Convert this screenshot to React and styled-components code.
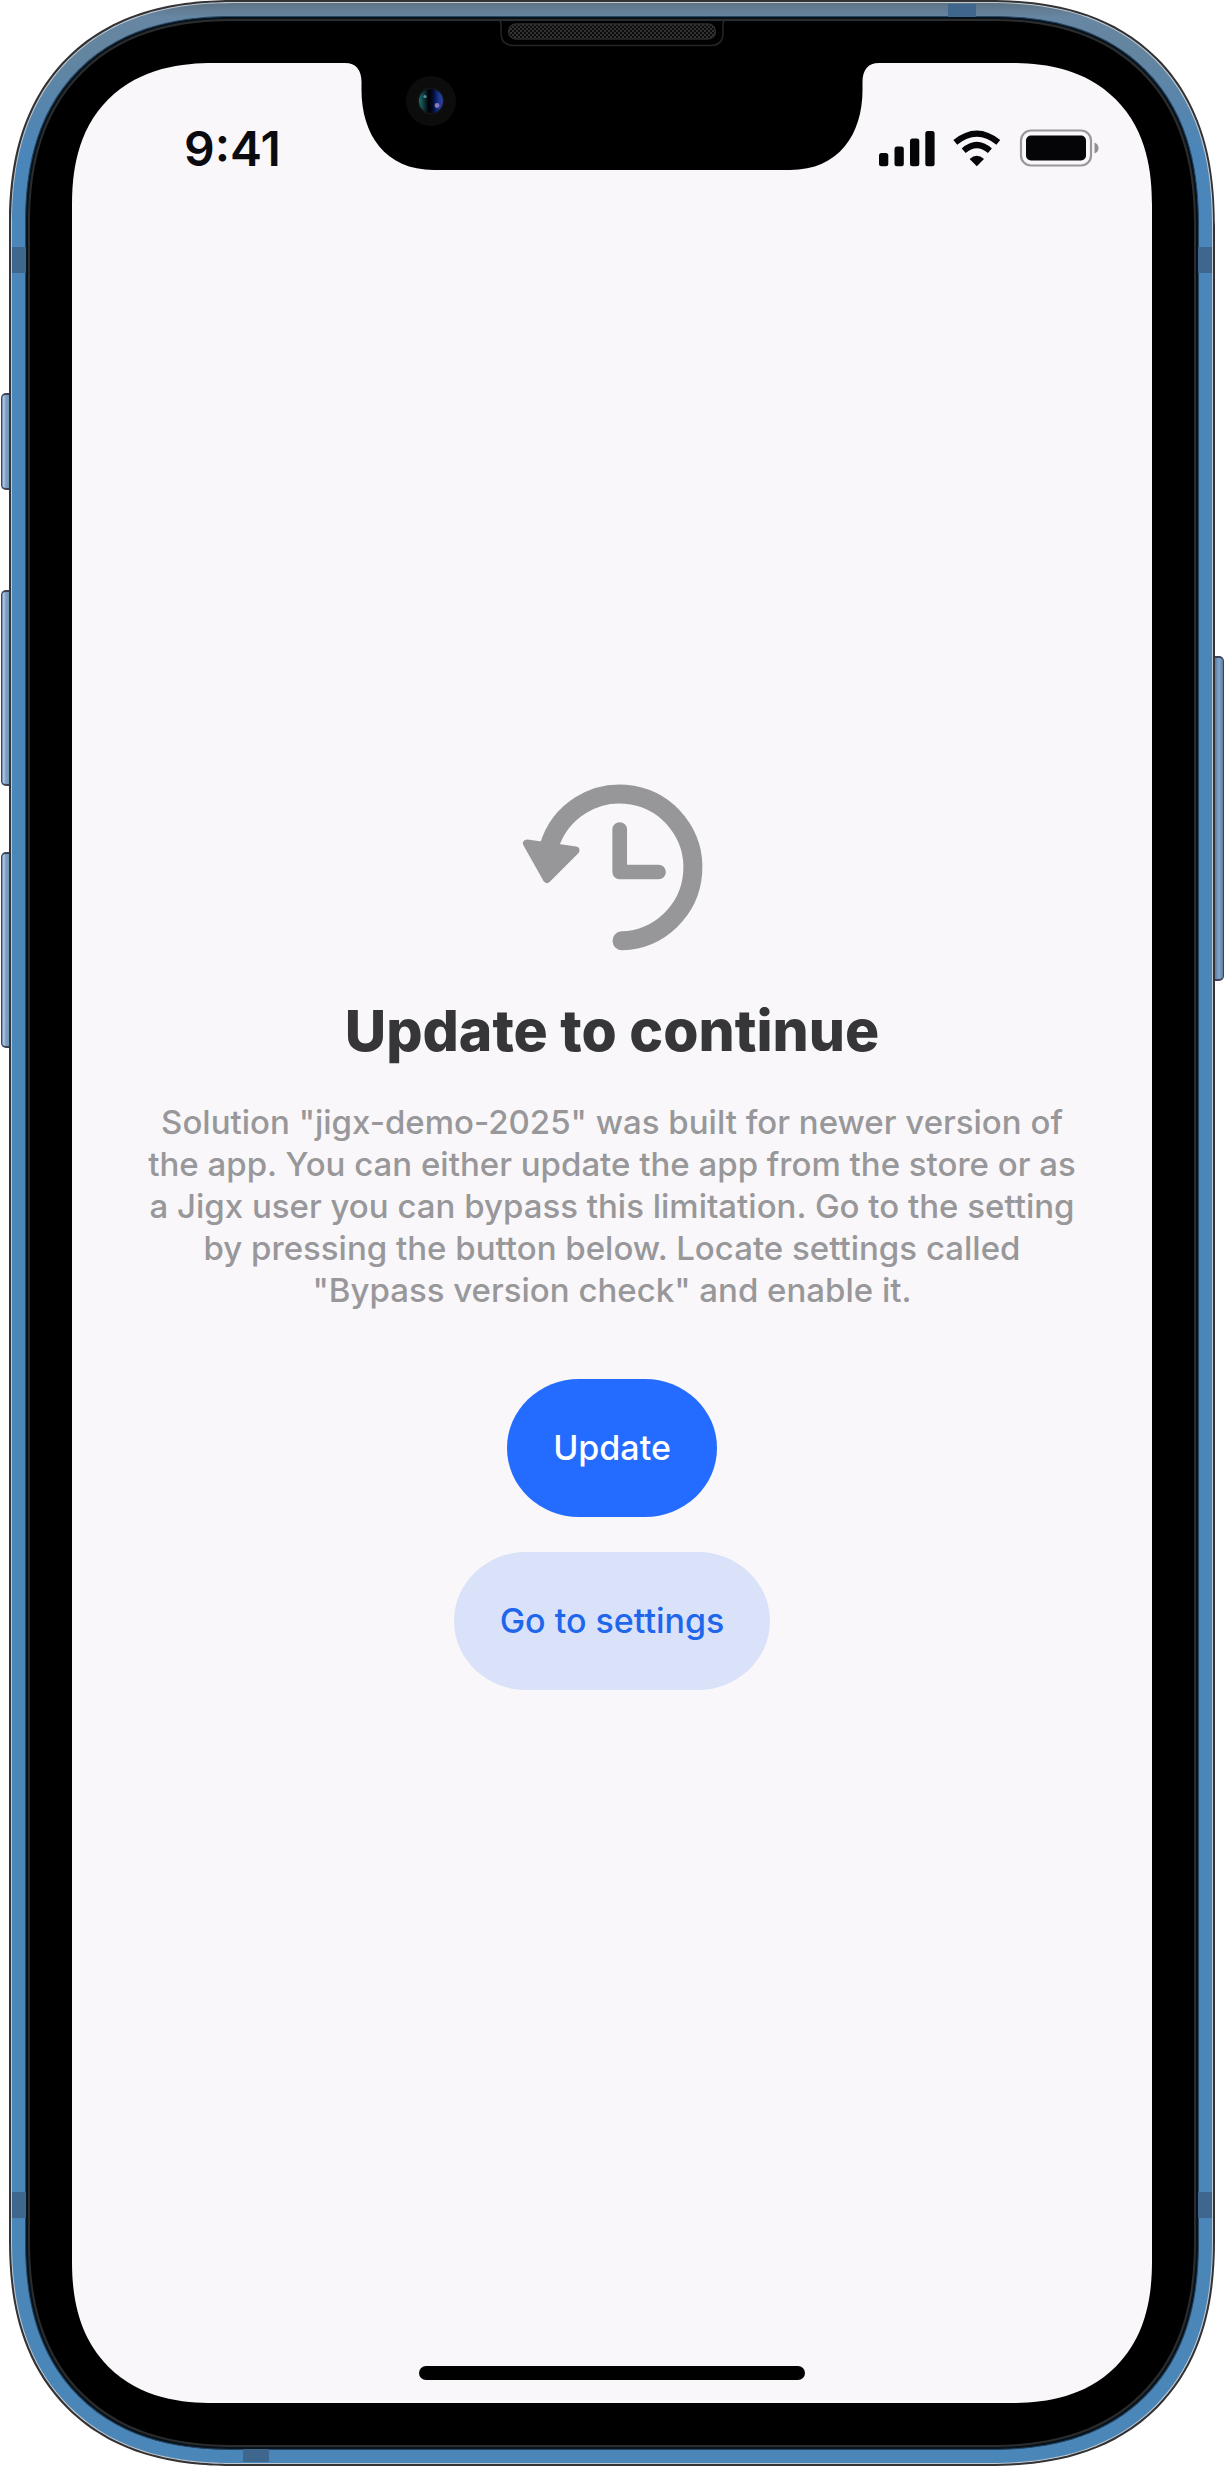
import React from "react";
import styled, { createGlobalStyle } from "styled-components";

const GlobalStyle = createGlobalStyle`
  *, *::before, *::after { box-sizing: border-box; }
  html, body, #root { height: 100%; }
  body {
    margin: 0;
    background: #ffffff;
    font-family: Inter, "Liberation Sans", sans-serif;
  }
`;

const Device = styled.div`
  display: grid;
  grid-template-columns: 9px minmax(0, 1fr) 9px;
  min-height: 100%;
`;

const Rail = styled.div`
  display: flex;
  flex-direction: column;
  padding-top: ${(p) => p.$top}px;
  padding-left: ${(p) => (p.$side === "left" ? 1 : 0)}px;
`;

const SideKey = styled.span`
  height: ${(p) => p.$height}px;
  margin-bottom: ${(p) => p.$gap || 0}px;
  border: 1px solid #3c4258;
  border-width: ${(p) => (p.$side === "left" ? "2px 0 2px 1px" : "2px 1px 2px 0")};
  border-radius: ${(p) => (p.$side === "left" ? "5px 0 0 5px" : "0 5px 5px 0")};
  background: ${(p) =>
    p.$side === "left"
      ? "linear-gradient(90deg, #6a7fa0, #b9cbe0 25%, #7fa5c8 50%, #6f94b8)"
      : "linear-gradient(90deg, #5e7ca6, #7fa5cb 50%, #5f7da5)"};
`;

const smooth = (round, wide) => `
  border-radius: ${round}px;
  @supports (corner-shape: superellipse(1.23)) {
    border-radius: ${wide}px;
    corner-shape: superellipse(1.23);
  }
`;

const Edge = styled.div`
  position: relative;
  display: flex;
  padding: 2px;
  background: #333235;
  ${smooth(198, 226)}
`;

const Metal = styled.div`
  flex: 1;
  display: flex;
  padding: 13px;
  border: 1px solid #c0c8d0;
  background: linear-gradient(180deg, #5f7385 0, #6686a3 14px, #64859f 50px, #4b86ba 150px, #4b86b8 100%);
  ${smooth(196, 224)}
`;

const Groove = styled.div`
  flex: 1;
  display: flex;
  padding: 2px;
  border: 1px solid #254663;
  background: #08121b;
  ${smooth(181, 209)}
`;

const Bezel = styled.div`
  flex: 1;
  display: flex;
  padding: 42px;
  border: 2px solid #2a2c2e;
  background: #000000;
  ${smooth(178, 206)}
`;

const Screen = styled.div`
  position: relative;
  flex: 1;
  display: flex;
  flex-direction: column;
  background: #f9f7fa;
  ${smooth(123, 142)}
`;

const bandPlace = {
  leftTop: "left: 3px; top: 247px; width: 14px; height: 26px;",
  rightTop: "right: 3px; top: 247px; width: 14px; height: 26px;",
  leftBottom: "left: 3px; bottom: 248px; width: 14px; height: 26px;",
  rightBottom: "right: 3px; bottom: 248px; width: 14px; height: 26px;",
  top: "right: 239px; top: 4px; width: 28px; height: 13px;",
  bottom: "left: 234px; bottom: 4px; width: 26px; height: 13px;",
};

const Band = styled.span`
  position: absolute;
  background: #3f678e;
  ${(p) => bandPlace[p.$at]}
`;

const NotchArt = styled.svg`
  position: absolute;
  top: -43px;
  left: 50%;
  width: 540px;
  height: 151px;
  margin-left: -270px;
`;

const StatusBar = styled.header`
  display: flex;
  justify-content: space-between;
  align-items: center;
  height: 140px;
  padding: 32px 53px 0 112px;
`;

const Clock = styled.time`
  font-size: 48px;
  line-height: 56px;
  font-weight: 600;
  color: #0b0b0f;
`;

const StatusIcons = styled.svg`
  width: 222px;
  height: 40px;
`;

const Content = styled.main`
  flex: 1;
  display: flex;
  flex-direction: column;
  align-items: center;
  justify-content: center;
  padding: 8px 56px 0;
  text-align: center;
`;

const HistoryIcon = styled.svg`
  width: 184px;
  height: 168px;
  overflow: visible;
`;

const Title = styled.h1`
  margin: 42px 0 0;
  font-size: 57px;
  line-height: 72px;
  font-weight: 800;
  color: #363638;
`;

const Message = styled.p`
  max-width: 952px;
  margin: 34px 0 0;
  font-size: 33px;
  line-height: 42px;
  font-weight: 500;
  color: #98979a;
`;

const Actions = styled.div`
  display: flex;
  flex-direction: column;
  align-items: center;
  gap: 35px;
  margin-top: 68px;
`;

const PillButton = styled.button`
  height: 138px;
  padding: 0 46px;
  border: 0;
  border-radius: 72px / 69px;
  font: 500 34px/42px Inter, "Liberation Sans", sans-serif;
  color: ${(p) => (p.$primary ? "#ffffff" : "#1f66ec")};
  background: ${(p) => (p.$primary ? "#246bff" : "#dae2f9")};
  cursor: pointer;
`;

const HomeArea = styled.footer`
  display: flex;
  align-items: flex-end;
  justify-content: center;
  height: 140px;
  padding-bottom: 23px;
`;

const HomeBar = styled.span`
  width: 386px;
  height: 14px;
  border-radius: 7px;
  background: #000000;
`;

function Notch() {
  return (
    <NotchArt viewBox="0 0 540 151" aria-hidden="true">
      <defs>
        <pattern id="mesh" width="4" height="4" patternUnits="userSpaceOnUse">
          <rect width="4" height="4" fill="#0b0b0b" />
          <rect width="2" height="2" fill="#333333" />
          <rect x="2" y="2" width="2" height="2" fill="#333333" />
        </pattern>
        <linearGradient id="lens" x1="0" x2="1" y1="0" y2="0">
          <stop offset="0" stopColor="#1f6f68" />
          <stop offset="0.25" stopColor="#0a2a30" />
          <stop offset="0.4" stopColor="#000000" />
          <stop offset="0.58" stopColor="#020a30" />
          <stop offset="0.85" stopColor="#173c9c" />
          <stop offset="1" stopColor="#3b3590" />
        </linearGradient>
      </defs>
      <path
        d="M0 43 H3 C14 43 19.500 50 19.500 62 V70 C19.500 114 43 150 92 150 H448 C497 150 520.500 114 520.500 70 V62 C520.500 50 526 43 537 43 H540 V2 H0 Z"
        fill="#000000"
      />
      <path d="M157 0.500 Q159 1 159 4 V13 Q159 25.500 172 25.500 H368 Q381 25.500 381 13 V4 Q381 1 383 0.500" fill="none" stroke="#262626" strokeWidth="1.500" />
      <rect x="166.500" y="4" width="207" height="15" rx="7.500" fill="url(#mesh)" stroke="#2c2c2c" strokeWidth="1.500" />
      <circle cx="89" cy="81" r="25" fill="#0c0c0c" />
      <circle cx="89" cy="81" r="13.500" fill="#131516" />
      <circle cx="89" cy="81" r="12" fill="url(#lens)" />
      <circle cx="83" cy="76.500" r="1.600" fill="#4f8fa5" />
      <circle cx="95" cy="85.500" r="2.400" fill="#8a78b8" />
    </NotchArt>
  );
}

function Status() {
  return (
    <StatusIcons viewBox="0 0 222 40" role="img" aria-label="Signal, Wi-Fi and battery full">
      <g fill="#050507">
        <rect x="2" y="24" width="9.300" height="13.300" rx="2.500" />
        <rect x="17.500" y="17.500" width="9.300" height="19.800" rx="2.500" />
        <rect x="33" y="9.500" width="9.300" height="27.800" rx="2.500" />
        <rect x="48.300" y="2" width="9.300" height="35.300" rx="2.500" />
        <path d="M99.800 37.300 L92.600 30 Q99.800 23.300 107 30 Z" />
      </g>
      <g fill="none" stroke="#050507" strokeWidth="6">
        <path d="M78.300 13.300 Q99.800 -4.200 121.300 13.300" />
        <path d="M86.700 21.800 Q99.800 10.200 112.900 21.800" />
      </g>
      <rect x="144" y="1.500" width="70" height="35" rx="10" fill="none" stroke="#99989c" strokeWidth="2.200" />
      <rect x="149" y="6.500" width="60" height="25" rx="5" fill="#050507" />
      <path d="M217.500 13.500 Q221.500 15 221.500 19 Q221.500 23 217.500 24.500 Z" fill="#8f8e92" />
    </StatusIcons>
  );
}

export default function App() {
  return (
    <>
      <GlobalStyle />
      <Device>
        <Rail $side="left" $top={393}>
          <SideKey $side="left" $height={97} $gap={100} />
          <SideKey $side="left" $height={196} $gap={66} />
          <SideKey $side="left" $height={196} />
        </Rail>
        <Edge>
          <Metal>
            <Groove>
              <Bezel>
                <Screen>
                  <StatusBar>
                    <Clock>9:41</Clock>
                    <Status />
                  </StatusBar>
                  <Content>
                    <HistoryIcon viewBox="0 0 184 168" aria-hidden="true">
                      <g fill="none" stroke="#979799" strokeLinecap="round" strokeLinejoin="round">
                        <path d="M29 62 A73.400 73.400 0 1 1 102 155.800" strokeWidth="19" />
                        <path d="M99.700 44.500 V87 H138.500" strokeWidth="14.700" />
                        <path d="M7 58.500 L55.500 65.500 L27 94 Z" fill="#979799" strokeWidth="8" />
                      </g>
                    </HistoryIcon>
                    <Title>Update to continue</Title>
                    <Message>
                      Solution "jigx-demo-2025" was built for newer version of the app. You can either
                      update the app from the store or as a Jigx user you can bypass this limitation. Go
                      to the setting by pressing the button below. Locate settings called "Bypass version
                      check" and enable it.
                    </Message>
                    <Actions>
                      <PillButton type="button" $primary>Update</PillButton>
                      <PillButton type="button">Go to settings</PillButton>
                    </Actions>
                  </Content>
                  <HomeArea>
                    <HomeBar />
                  </HomeArea>
                  <Notch />
                </Screen>
              </Bezel>
            </Groove>
          </Metal>
          <Band $at="leftTop" />
          <Band $at="rightTop" />
          <Band $at="leftBottom" />
          <Band $at="rightBottom" />
          <Band $at="top" />
          <Band $at="bottom" />
        </Edge>
        <Rail $side="right" $top={656}>
          <SideKey $side="right" $height={325} />
        </Rail>
      </Device>
    </>
  );
}
